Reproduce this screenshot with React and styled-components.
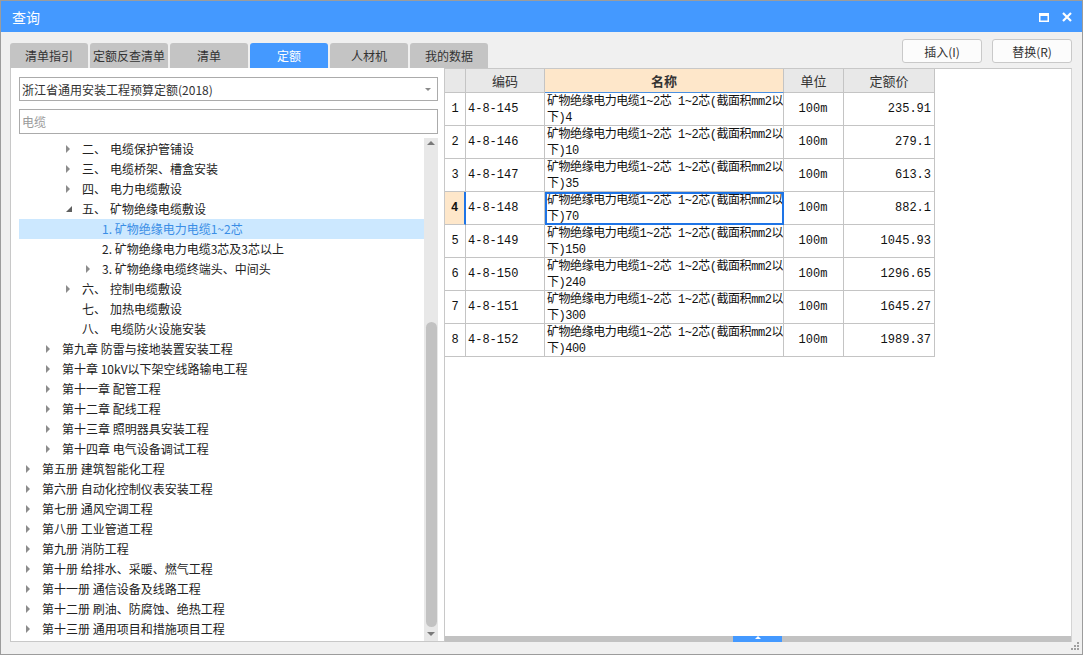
import React from 'react';
import styled, { createGlobalStyle, css } from 'styled-components';

/* 样式 */
const GlobalStyle = createGlobalStyle`
  html, body {
    margin: 0;
    padding: 0;
    background: #f0f0f0;
  }
  * {
    box-sizing: border-box;
  }
`;

const UI_FONT = `"Noto Sans CJK SC", "Microsoft YaHei", sans-serif`;
const DATA_FONT = `"Liberation Mono", "Noto Sans CJK SC", monospace`;

const Window = styled.div`
  position: relative;
  width: 1083px;
  height: 655px;
  display: flex;
  flex-direction: column;
  background: #f0f0f0;
  border: 1px solid #9c9c9c;
  font-family: ${UI_FONT};
  font-size: 12px;
  color: #333;
`;

const TitleBar = styled.div`
  height: 31px;
  flex-shrink: 0;
  display: flex;
  align-items: center;
  justify-content: space-between;
  padding: 0 10px 0 11px;
  background: #4499ff;
  color: #fff;
  font-size: 14px;
`;

const WinButtons = styled.div`
  display: flex;
  align-items: center;
  gap: 13px;
  margin-top: 1px;
`;

const Body = styled.div`
  flex: 1;
  display: flex;
  flex-direction: column;
  padding: 0 10px 0 9px;
`;

const Toolbar = styled.div`
  height: 36px;
  display: flex;
  justify-content: space-between;
`;

const Tabs = styled.div`
  display: flex;
  align-items: flex-end;
  gap: 2px;
`;

const Tab = styled.div`
  width: 78px;
  height: 25px;
  display: flex;
  align-items: center;
  justify-content: center;
  border-radius: 3px 3px 0 0;
  background: ${p => (p.$active ? '#4499ff' : '#c4c4c4')};
  color: ${p => (p.$active ? '#fff' : '#333')};
  white-space: nowrap;
`;

const Actions = styled.div`
  display: flex;
  gap: 10px;
  padding-top: 7px;
`;

const Button = styled.button`
  width: 80px;
  height: 24px;
  border: 1px solid #c9c9c9;
  border-radius: 3px;
  background: #fcfcfc;
  color: #333;
  font-family: ${UI_FONT};
  font-size: 12px;
  padding: 0;
`;

const Main = styled.div`
  height: 574px;
  display: flex;
`;

const LeftPanel = styled.div`
  width: 434px;
  display: flex;
  flex-direction: column;
  background: #fff;
  border-left: 1px solid #c8c8c8;
  border-bottom: 1px solid #c8c8c8;
  padding: 9px 6px 0 8px;
`;

const Select = styled.div`
  height: 24px;
  display: flex;
  align-items: center;
  justify-content: space-between;
  border: 1px solid #ababab;
  padding: 0 6px 0 2px;
  color: #333;
`;

const Caret = styled.span`
  width: 0;
  height: 0;
  border-left: 3px solid transparent;
  border-right: 3px solid transparent;
  border-top: 3px solid #8a8a8a;
`;

const Search = styled.div`
  height: 25px;
  margin-top: 8px;
  display: flex;
  align-items: center;
  border: 1px solid #ababab;
  padding: 0 2px;
  color: #9a9a9a;
`;

const TreeArea = styled.div`
  flex: 1;
  display: flex;
  margin-top: 4px;
  min-height: 0;
`;

const TreeList = styled.div`
  flex: 1;
  overflow: hidden;
  padding-top: 1px;
`;

const TreeRow = styled.div`
  height: 20px;
  line-height: 20px;
  display: flex;
  align-items: center;
  padding-left: ${p => 7 + p.$level * 20}px;
  white-space: nowrap;
  color: ${p => (p.$selected ? '#3a8ee6' : '#222')};
  background: ${p => (p.$selected ? '#cce8ff' : 'transparent')};
`;

const Toggle = styled.span`
  width: 16px;
  height: 20px;
  flex-shrink: 0;
  display: flex;
  align-items: center;
`;

const Collapsed = styled.span`
  width: 0;
  height: 0;
  border-top: 4px solid transparent;
  border-bottom: 4px solid transparent;
  border-left: 4px solid #8c8c8c;
`;

const Prefix = styled.span`
  margin-right: 4px;
`;

const VScroll = styled.div`
  width: 14px;
  display: flex;
  flex-direction: column;
  align-items: center;
  background: #e8e8e8;
`;

const ArrowUp = styled.span`
  margin-top: 3px;
  width: 0;
  height: 0;
  border-left: 4px solid transparent;
  border-right: 4px solid transparent;
  border-bottom: 4px solid #7a7a7a;
`;

const ArrowDown = styled(ArrowUp)`
  margin-top: 5px;
  border-bottom: none;
  border-top: 4px solid #7a7a7a;
`;

const Thumb = styled.div`
  width: 11px;
  height: 305px;
  margin-top: 177px;
  border-radius: 6px;
  background: #c2c2c2;
`;

const GridPanel = styled.div`
  flex: 1;
  display: flex;
  flex-direction: column;
  background: #fff;
  border-top: 1px solid #c8c8c8;
  border-left: 1px solid #c8c8c8;
  border-right: 1px solid #d4d4d4;
`;

const GridWrap = styled.div`
  flex: 1;
`;

const Grid = styled.div`
  display: grid;
  grid-template-columns: 21px 79px 239px 60px 91px;
  grid-auto-rows: 33px;
  grid-template-rows: 24px;
  width: 490px;
`;

const Cell = styled.div`
  border-right: 1px solid #c4c4c4;
  border-bottom: 1px solid #c4c4c4;
  display: flex;
  align-items: center;
  overflow: hidden;
  white-space: nowrap;
  font-family: ${DATA_FONT};
  font-size: 12px;
  color: #111;
  justify-content: ${p => p.$align || 'flex-start'};
  padding: 0 ${p => (p.$align === 'flex-end' ? '3px' : '1px')} 0 ${p => (p.$align === 'flex-start' || !p.$align ? '2px' : '0')};
`;

const HeadCell = styled(Cell)`
  font-family: ${UI_FONT};
  font-size: 13px;
  color: #333;
  justify-content: center;
  padding: 0;
  background: ${p => (p.$current ? '#fee7ca' : '#e8e8e8')};
  font-weight: ${p => (p.$current ? 'bold' : 'normal')};
  ${p => p.$current && css`border-bottom-color: #4a90e2;`}
`;

const NumCell = styled(Cell)`
  justify-content: center;
  padding: 0;
  ${p => p.$active && css`
    background: #fee7ca;
    font-weight: bold;
    border-right: 2px solid #1e74e6;
  `}
`;

const NameCell = styled(Cell)`
  flex-direction: column;
  align-items: flex-start;
  justify-content: flex-start;
  line-height: 16px;
  letter-spacing: -0.45px;
  padding: 1px 0 0 2px;
  ${p => p.$active && css`
    outline: 2px solid #1e74e6;
    outline-offset: -2px;
  `}
`;

const HScroll = styled.div`
  height: 6px;
  display: flex;
  background: #c2c2c2;
`;

const HThumb = styled.div`
  width: 49px;
  margin-left: 288px;
  display: flex;
  justify-content: center;
  background: #4499ff;
`;

const HThumbMark = styled.span`
  width: 0;
  height: 0;
  border-left: 3px solid transparent;
  border-right: 3px solid transparent;
  border-bottom: 3px solid #fff;
`;

const Grip = styled.svg`
  position: absolute;
  right: 2px;
  bottom: 3px;
`;

/* 数据 */
const tabs = ['清单指引', '定额反查清单', '清单', '定额', '人材机', '我的数据'];

const tree = [
  { level: 2, state: 'closed', prefix: '二、', text: '电缆保护管铺设' },
  { level: 2, state: 'closed', prefix: '三、', text: '电缆桥架、槽盒安装' },
  { level: 2, state: 'closed', prefix: '四、', text: '电力电缆敷设' },
  { level: 2, state: 'open', prefix: '五、', text: '矿物绝缘电缆敷设' },
  { level: 3, text: '1. 矿物绝缘电力电缆1~2芯', selected: true },
  { level: 3, text: '2. 矿物绝缘电力电缆3芯及3芯以上' },
  { level: 3, state: 'closed', text: '3. 矿物绝缘电缆终端头、中间头' },
  { level: 2, state: 'closed', prefix: '六、', text: '控制电缆敷设' },
  { level: 2, prefix: '七、', text: '加热电缆敷设' },
  { level: 2, prefix: '八、', text: '电缆防火设施安装' },
  { level: 1, state: 'closed', text: '第九章 防雷与接地装置安装工程' },
  { level: 1, state: 'closed', text: '第十章 10kV以下架空线路输电工程' },
  { level: 1, state: 'closed', text: '第十一章 配管工程' },
  { level: 1, state: 'closed', text: '第十二章 配线工程' },
  { level: 1, state: 'closed', text: '第十三章 照明器具安装工程' },
  { level: 1, state: 'closed', text: '第十四章 电气设备调试工程' },
  { level: 0, state: 'closed', text: '第五册 建筑智能化工程' },
  { level: 0, state: 'closed', text: '第六册 自动化控制仪表安装工程' },
  { level: 0, state: 'closed', text: '第七册 通风空调工程' },
  { level: 0, state: 'closed', text: '第八册 工业管道工程' },
  { level: 0, state: 'closed', text: '第九册 消防工程' },
  { level: 0, state: 'closed', text: '第十册 给排水、采暖、燃气工程' },
  { level: 0, state: 'closed', text: '第十一册 通信设备及线路工程' },
  { level: 0, state: 'closed', text: '第十二册 刷油、防腐蚀、绝热工程' },
  { level: 0, state: 'closed', text: '第十三册 通用项目和措施项目工程' },
];

const items = [
  ['4-8-145', '4', '235.91'],
  ['4-8-146', '10', '279.1'],
  ['4-8-147', '35', '613.3'],
  ['4-8-148', '70', '882.1'],
  ['4-8-149', '150', '1045.93'],
  ['4-8-150', '240', '1296.65'],
  ['4-8-151', '300', '1645.27'],
  ['4-8-152', '400', '1989.37'],
];

const ACTIVE_ROW = 3;

/* 组件 */
function TreeToggle({ state }) {
  if (state === 'closed') return <Toggle><Collapsed /></Toggle>;
  if (state === 'open') {
    return (
      <Toggle>
        <svg width="6" height="6" viewBox="0 0 6 6">
          <polygon points="6,0 6,6 0,6" fill="#5f5f5f" />
        </svg>
      </Toggle>
    );
  }
  return <Toggle />;
}

export default function App() {
  return (
    <>
      <GlobalStyle />
      <Window>
        <TitleBar>
          <span>查询</span>
          <WinButtons>
            <svg width="10" height="9" viewBox="0 0 10 9">
              <rect x="0.75" y="0.75" width="8.5" height="7.5" fill="none" stroke="#fff" strokeWidth="1.5" />
              <rect x="0" y="0" width="10" height="3" fill="#fff" />
            </svg>
            <svg width="10" height="10" viewBox="0 0 10 10">
              <path d="M1 1 L9 9 M9 1 L1 9" stroke="#fff" strokeWidth="2.2" />
            </svg>
          </WinButtons>
        </TitleBar>

        <Body>
          <Toolbar>
            <Tabs>
              {tabs.map(t => (
                <Tab key={t} $active={t === '定额'}>{t}</Tab>
              ))}
            </Tabs>
            <Actions>
              <Button>插入(I)</Button>
              <Button>替换(R)</Button>
            </Actions>
          </Toolbar>

          <Main>
            <LeftPanel>
              <Select>
                <span>浙江省通用安装工程预算定额(2018)</span>
                <Caret />
              </Select>
              <Search>电缆</Search>
              <TreeArea>
                <TreeList>
                  {tree.map((n, i) => (
                    <TreeRow key={i} $level={n.level} $selected={n.selected}>
                      <TreeToggle state={n.state} />
                      {n.prefix && <Prefix>{n.prefix}</Prefix>}
                      <span>{n.text}</span>
                    </TreeRow>
                  ))}
                </TreeList>
                <VScroll>
                  <ArrowUp />
                  <Thumb />
                  <ArrowDown />
                </VScroll>
              </TreeArea>
            </LeftPanel>

            <GridPanel>
              <GridWrap>
                <Grid>
                  <HeadCell />
                  <HeadCell>编码</HeadCell>
                  <HeadCell $current>名称</HeadCell>
                  <HeadCell>单位</HeadCell>
                  <HeadCell>定额价</HeadCell>
                  {items.map(([code, spec, price], i) => (
                    <React.Fragment key={code}>
                      <NumCell $active={i === ACTIVE_ROW}>{i + 1}</NumCell>
                      <Cell>{code}</Cell>
                      <NameCell $active={i === ACTIVE_ROW}>
                        <span>矿物绝缘电力电缆1~2芯 1~2芯(截面积mm2以</span>
                        <span>下){spec}</span>
                      </NameCell>
                      <Cell $align="center">100m</Cell>
                      <Cell $align="flex-end">{price}</Cell>
                    </React.Fragment>
                  ))}
                </Grid>
              </GridWrap>
              <HScroll>
                <HThumb>
                  <HThumbMark />
                </HThumb>
              </HScroll>
            </GridPanel>
          </Main>
        </Body>

        <Grip width="10" height="10" viewBox="0 0 10 10">
          <rect x="7" y="1" width="2" height="2" fill="#a0a0a0" />
          <rect x="4" y="4" width="2" height="2" fill="#a0a0a0" />
          <rect x="7" y="4" width="2" height="2" fill="#a0a0a0" />
          <rect x="1" y="7" width="2" height="2" fill="#a0a0a0" />
          <rect x="4" y="7" width="2" height="2" fill="#a0a0a0" />
          <rect x="7" y="7" width="2" height="2" fill="#a0a0a0" />
        </Grip>
      </Window>
    </>
  );
}
